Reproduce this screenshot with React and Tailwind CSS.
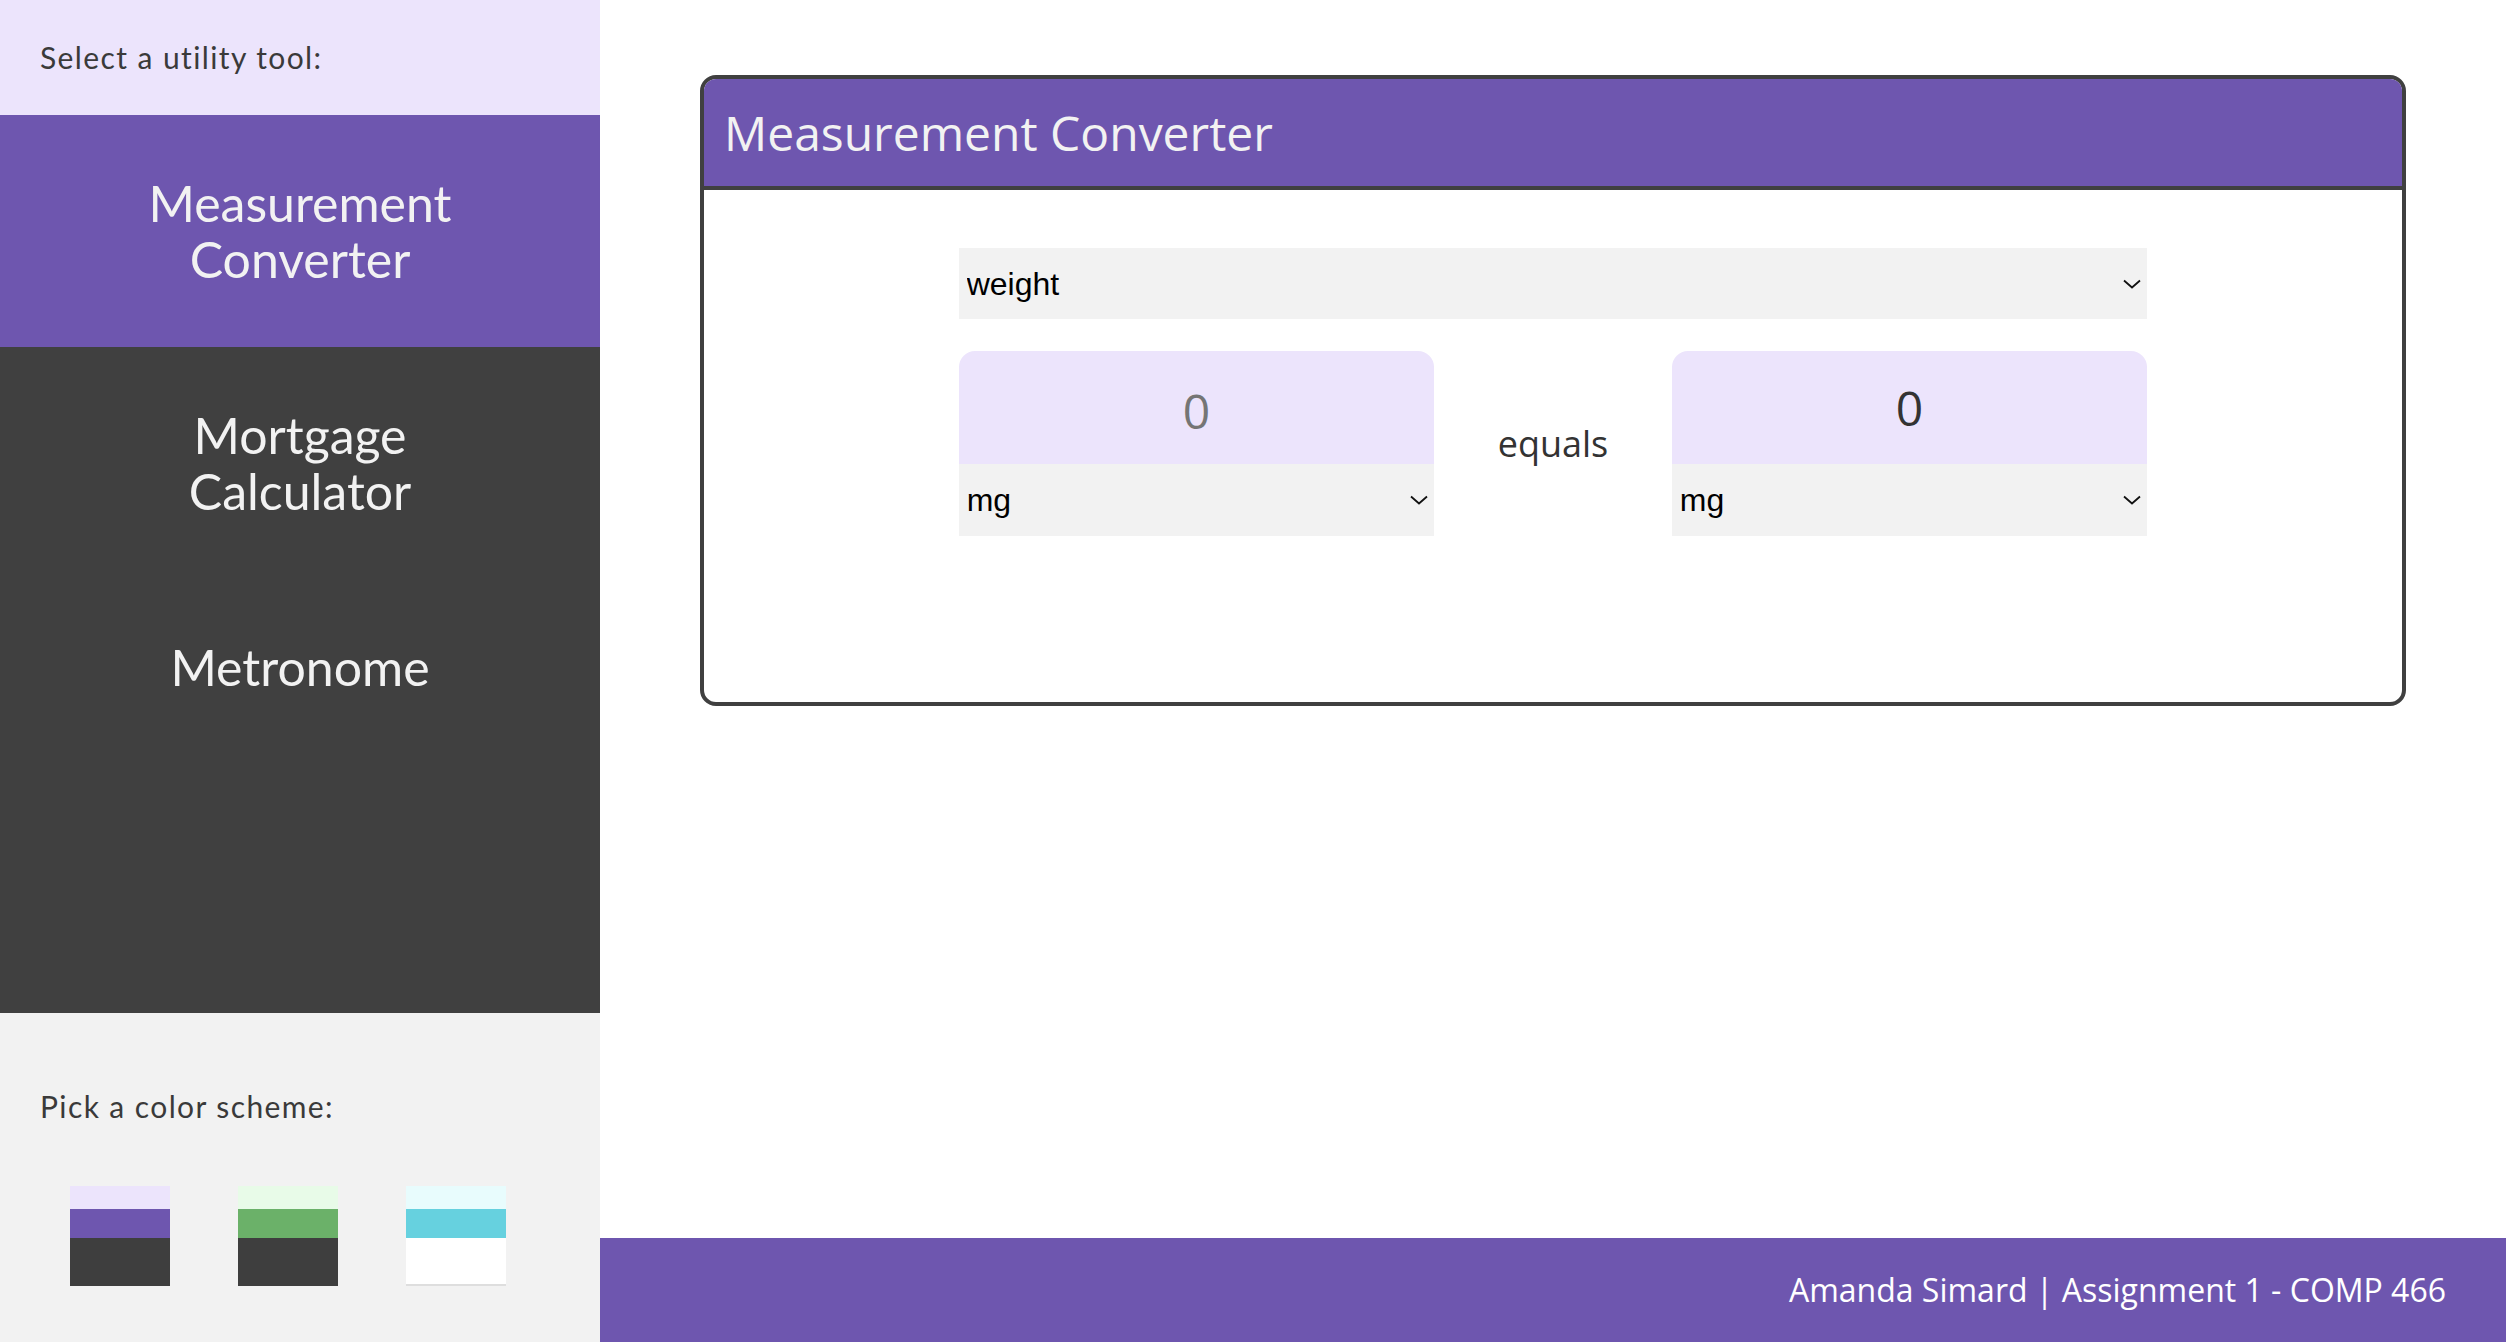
import React from 'react';

const raleway = { fontFamily: 'Lato, "Open Sans", sans-serif' };

const Chevron = () => (
  <svg
    className="pointer-events-none absolute right-[6px] top-1/2 -translate-y-1/2"
    width="18"
    height="10"
    viewBox="0 0 18 10"
    fill="none"
  >
    <path d="M1 1.5 L9 8.5 L17 1.5" stroke="#111" strokeWidth="1.8" />
  </svg>
);

const Select = ({ value, options, className = '' }) => (
  <div className={`relative bg-[#f2f2f2] ${className}`}>
    <select
      defaultValue={value}
      className="h-full w-full appearance-none bg-transparent pl-[8px] text-[32px] text-black outline-none font-['Liberation_Sans',Arial,sans-serif]"
    >
      {options.map((o) => (
        <option key={o} value={o}>{o}</option>
      ))}
    </select>
    <Chevron />
  </div>
);

const tools = [
  { id: 'measure', label: ['Measurement', 'Converter'], active: true },
  { id: 'mortgage', label: ['Mortgage', 'Calculator'], active: false },
  { id: 'metronome', label: ['Metronome'], active: false },
];

const schemes = [
  { id: 'purple', top: 'bg-[#ece4fc]', mid: 'bg-[#6e56af]', bottom: 'bg-[#3e3e3e]' },
  { id: 'green', top: 'bg-[#e8fbe8]', mid: 'bg-[#6bb169]', bottom: 'bg-[#3e3e3e]' },
  { id: 'cyan', top: 'bg-[#e8fcfd]', mid: 'bg-[#66d1df]', bottom: 'bg-white border-b-2 border-[#dedede]' },
];

const units = ['mg', 'g', 'kg', 'oz', 'lb'];

export default function App() {
  return (
    <div className="flex h-screen w-full overflow-hidden bg-white">
      {/* sidebar */}
      <aside className="flex w-[600px] shrink-0 flex-col bg-[#404040] [font-variant-ligatures:none]" style={raleway}>
        <div className="flex h-[115px] items-center bg-[#ece4fc] px-[40px] text-[30px] tracking-[1.4px] text-[#3a3a3a]">
          Select a utility tool:
        </div>
        <nav className="flex flex-1 flex-col">
          {tools.map((tool) => (
            <button
              key={tool.id}
              className={`py-[60px] text-center text-[50px] leading-[56px] text-[#f2f2f2] ${
                tool.active ? 'bg-[#6e56af]' : 'bg-[#404040]'
              }`}
            >
              {tool.label.map((line) => (
                <div key={line}>{line}</div>
              ))}
            </button>
          ))}
        </nav>
        <div className="h-[329px] bg-[#f2f2f2] pt-[76px]">
          <p className="px-[40px] text-[30px] leading-[34px] tracking-[1.4px] text-[#3a3a3a]">Pick a color scheme:</p>
          <div className="mt-[63px] flex gap-[68px] px-[70px]">
            {schemes.map((s) => (
              <button key={s.id} className="flex h-[100px] w-[100px] flex-col">
                <div className={`h-[23px] ${s.top}`}></div>
                <div className={`h-[29px] ${s.mid}`}></div>
                <div className={`flex-1 ${s.bottom}`}></div>
              </button>
            ))}
          </div>
        </div>
      </aside>

      {/* main */}
      <main className="flex flex-1 flex-col font-['Open_Sans',sans-serif]">
        <div className="flex-1 px-[100px] pt-[75px]">
          <div className="overflow-hidden rounded-[16px] border-4 border-[#404040]">
            <div className="flex h-[111px] items-center border-b-4 border-[#404040] bg-[#6e56af] px-[20px]">
              <h1 className="text-[48px] text-[#f2f2f2]">Measurement Converter</h1>
            </div>
            <div className="flex justify-center pb-[166px] pt-[58px]">
              <div className="w-[70%]">
                <Select value="weight" options={['weight', 'length', 'volume', 'temperature']} className="h-[71px]" />
                <div className="mt-[32px] flex">
                  <div className="w-[40%]">
                    <input
                      type="text"
                      placeholder="0"
                      className="h-[113px] w-full rounded-t-[16px] bg-[#ece4fc] pt-[6px] text-center text-[48px] text-[#333] placeholder:text-[#757575] outline-none"
                    />
                    <Select value="mg" options={units} className="h-[72px]" />
                  </div>
                  <div className="flex w-[20%] items-center justify-center text-[36px] text-[#333]">equals</div>
                  <div className="w-[40%]">
                    <input
                      type="text"
                      defaultValue="0"
                      className="h-[113px] w-full rounded-t-[16px] bg-[#ece4fc] text-center text-[48px] text-[#333] outline-none"
                    />
                    <Select value="mg" options={units} className="h-[72px]" />
                  </div>
                </div>
              </div>
            </div>
          </div>
        </div>
        <footer className="flex h-[104px] items-center justify-end bg-[#6e56af] pr-[60px] text-[32px] text-white">
          Amanda Simard | Assignment 1 - COMP 466
        </footer>
      </main>
    </div>
  );
}
